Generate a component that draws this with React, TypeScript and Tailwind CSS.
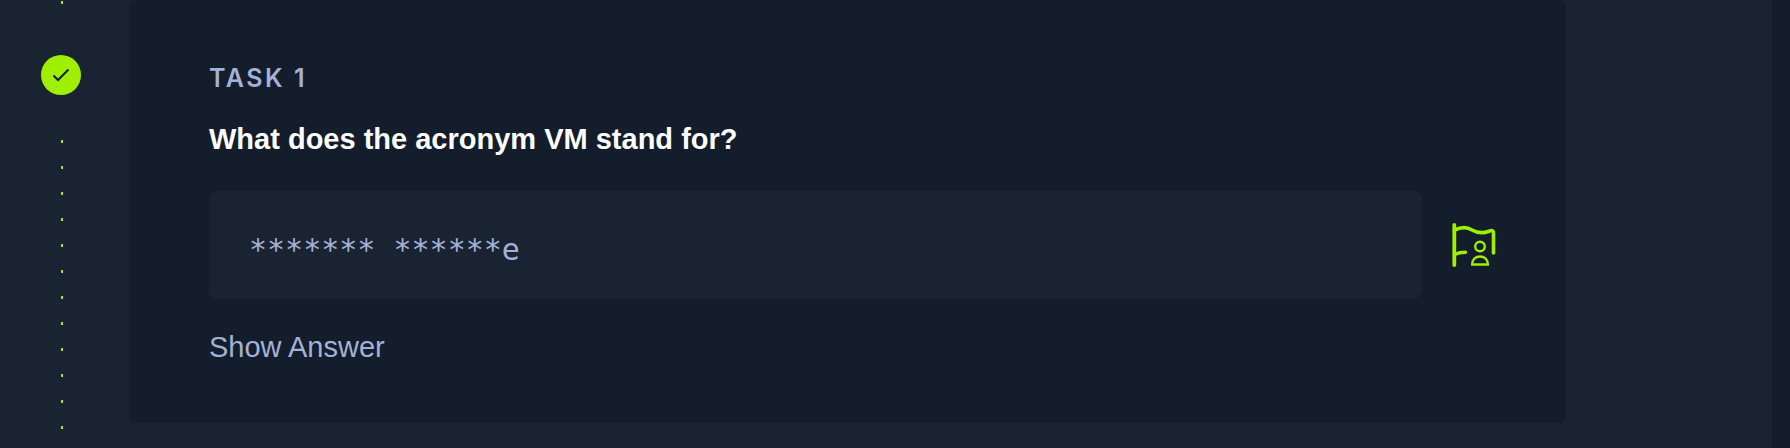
import React, { useState } from "react";

const dots = Array.from({ length: 12 }, (_, index) => index);

function App() {
  const [answer, setAnswer] = useState("");

  return (
    <div className="bg-[#141d2b] pr-[18px] font-['Liberation_Sans',sans-serif]">
      <main className="flex min-h-screen bg-[#1a2332] pr-[206px] pl-[41px]">
        <Timeline />
        <section className="ml-12 flex-1 self-start rounded-lg bg-[#141d2b] pt-16 pr-[70px] pb-14 pl-20">
          <p className="text-[25px] leading-7 font-semibold tracking-widest text-[#a4b1d6] font-['Inter','Liberation_Sans',sans-serif]">
            TASK 1
          </p>
          <label
            htmlFor="answer"
            className="mt-7 block text-[29px] leading-[38px] font-bold text-white"
          >
            What does the acronym VM stand for?
          </label>
          <div className="mt-[33px] flex items-center gap-[30px]">
            <input
              id="answer"
              type="text"
              value={answer}
              onChange={(e) => setAnswer(e.target.value)}
              placeholder="******* ******e"
              className="h-[108px] min-w-0 flex-1 rounded-lg bg-[#1a2332] px-10 pt-2 text-3xl text-[#a4b1d6] outline-none placeholder:text-[#a4b1d6] placeholder:opacity-100 font-['DejaVu_Sans_Mono',monospace]"
            />
            <button type="button" aria-label="Submit flag">
              <UserFlag />
            </button>
          </div>
          <button
            type="button"
            className="mt-7 block text-[29px] leading-10 text-[#a4b1d6]"
          >
            Show Answer
          </button>
        </section>
      </main>
    </div>
  );
}

// Progress column with the completed badge and the dotted line
const Timeline = () => {
  return (
    <div className="flex w-10 flex-col items-center pt-px">
      <span className="ml-0.5 h-[3px] w-0.5 bg-[#9fef00]"></span>
      <span className="mt-[51px] flex size-10 items-center justify-center rounded-full bg-[#9fef00]">
        <svg width="18" height="14" viewBox="0 0 18 14" fill="none">
          <path d="M1.5 7.5 L6 12 L16.5 1.5" stroke="#141d2b" strokeWidth="2" />
        </svg>
      </span>
      <div className="mt-[45px] ml-0.5 flex flex-col gap-[23px]">
        {dots.map((dot) => (
          <span key={dot} className="h-[3px] w-0.5 bg-[#9fef00]"></span>
        ))}
      </div>
    </div>
  );
};

const UserFlag = () => {
  return (
    <svg
      width="44"
      height="44"
      viewBox="0 0 44 44"
      fill="none"
      stroke="#9fef00"
      strokeLinecap="round"
      strokeLinejoin="round"
      className="block"
    >
      <path d="M2.3 2V42" strokeWidth="3.8" />
      <path
        d="M2.5 7C9 4 15 3.7 20 7C26 10.5 31 10.5 37 8.2C40 7 41.5 7.5 41.5 10V30"
        strokeWidth="3.6"
      />
      <path d="M2.5 31.5C6 29.8 9 29.2 13.5 29.2" strokeWidth="3.4" />
      <circle cx="28" cy="23.5" r="4.8" strokeWidth="2.4" />
      <path
        d="M20.2 41.5C20.2 36.5 23.5 33.5 28 33.5C32.5 33.5 35.8 36.5 35.8 41.5Z"
        strokeWidth="2.4"
        strokeLinejoin="miter"
      />
    </svg>
  );
};

export default App;
